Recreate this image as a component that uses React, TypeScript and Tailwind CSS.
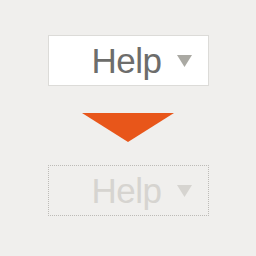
export default function App() {
  return (
    <main className="flex h-[256px] w-[256px] flex-col items-center bg-[#f0efed] pt-[35px] font-['Liberation_Sans',Arial,sans-serif]">
      <div className="flex h-[51px] w-[161px] items-center justify-end gap-[15px] border border-[#dcdbd8] bg-white pr-[16px]">
        <span className="text-[35px] leading-none tracking-[-0.5px] text-[#6d6d6b]">Help</span>
        <svg width="15" height="12" viewBox="0 0 15 12">
          <polygon points="0,0 15,0 7.5,12" fill="#aaa9a3" />
        </svg>
      </div>
      <svg className="mt-[27px]" width="92" height="29" viewBox="0 0 92 29">
        <polygon points="0,0 92,0 46,29" fill="#e8561a" />
      </svg>
      <div className="mt-[23px] flex h-[51px] w-[161px] items-center justify-end gap-[15px] border border-dotted border-[#bdbbb7] pr-[16px]">
        <span className="text-[35px] leading-none tracking-[-0.5px] text-[#d6d4d0]">Help</span>
        <svg width="15" height="12" viewBox="0 0 15 12">
          <polygon points="0,0 15,0 7.5,12" fill="#d6d4d0" />
        </svg>
      </div>
    </main>
  )
}
